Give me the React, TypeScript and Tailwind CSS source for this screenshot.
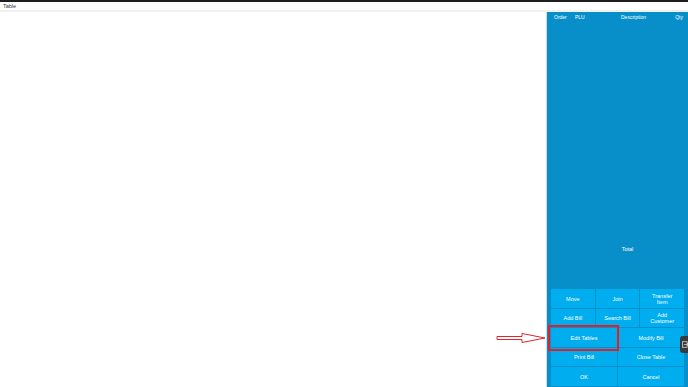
import React from 'react';

const Btn: React.FC<{ label: string; lines?: string[] }> = ({ label, lines }) => (
  <div className="flex-1 flex items-center justify-center bg-[#00adef] text-white text-[5.5px] leading-[6px] text-center">
    {lines ? (
      <span>
        {lines[0]}
        <br />
        {lines[1]}
      </span>
    ) : (
      label
    )}
  </div>
);

export default function App() {
  return (
    <div className="w-[688px] h-[387px] flex flex-col bg-white overflow-hidden font-['Liberation_Sans',Arial,sans-serif]">
      {/* window top edge */}
      <div className="h-[2px] bg-[#1e1e1e]" />
      <div className="h-[10px] flex items-center pl-[3px] border-b-2 border-[#f1f1f1] text-[5.5px] text-[#333]">
        Table
      </div>

      <div className="flex-1 flex min-h-0">
        {/* blank table area */}
        <div className="flex-1 relative bg-white border-r border-[#d8d8d8]">
          {/* annotation arrow */}
          <svg
            className="absolute left-[496px] top-[320px]"
            width="50"
            height="12"
            viewBox="0 0 50 12"
          >
            <polygon
              points="1,4.5 26,4.5 26,1.5 49,6 26,10.5 26,7.5 1,7.5"
              fill="white"
              stroke="#e0262b"
              strokeWidth="1"
            />
          </svg>
        </div>

        {/* order panel */}
        <div className="w-[141px] relative flex flex-col bg-[#088fca] pl-[4px] pr-[4px] pb-px">
          <div className="h-[11px] flex items-center text-white text-[5px]">
            <span className="w-[21px] pl-[3px]">Order</span>
            <span className="w-[46px] pl-[3px]">PLU</span>
            <span className="w-[50px] pl-[3px]">Description</span>
            <span className="flex-1 text-right pr-px">Qty</span>
          </div>

          <div className="flex-1 flex items-end justify-center pb-[36px] pl-[20px] text-white text-[5.5px]">
            Total
          </div>

          <div className="flex flex-col gap-px">
            <div className="h-[19px] flex gap-px">
              <Btn label="Move" />
              <Btn label="Join" />
              <Btn label="Transfer Item" lines={['Transfer', 'Item']} />
            </div>
            <div className="h-[18px] flex gap-px">
              <Btn label="Add Bill" />
              <Btn label="Search Bill" />
              <Btn label="Add Customer" lines={['Add', 'Customer']} />
            </div>
            <div className="h-[19px] flex gap-px">
              <div className="flex-1 relative flex">
                <Btn label="Edit Tables" />
                <div className="absolute -left-[3px] -top-[3px] -right-[2px] -bottom-[4px] border-2 border-[#e3202a]" />
              </div>
              <Btn label="Modify Bill" />
            </div>
            <div className="h-[18px] flex gap-px">
              <Btn label="Print Bill" />
              <Btn label="Close Table" />
            </div>
            <div className="h-[19px] flex gap-px">
              <Btn label="OK" />
              <Btn label="Cancel" />
            </div>
          </div>

          {/* floating exit tab */}
          <div className="absolute right-0 top-[324px] w-[8px] h-[17px] bg-[#3a3a3a] rounded-l-[3px] flex items-center pl-[1.5px]">
            <svg width="7" height="7" viewBox="0 0 7 7">
              <rect x="0.5" y="0.5" width="5" height="6" fill="none" stroke="#ddd" strokeWidth="0.8" />
              <path d="M2 3.5h5M5.5 2l1.5 1.5L5.5 5" fill="none" stroke="#ddd" strokeWidth="0.8" />
            </svg>
          </div>
        </div>
      </div>
    </div>
  );
}
